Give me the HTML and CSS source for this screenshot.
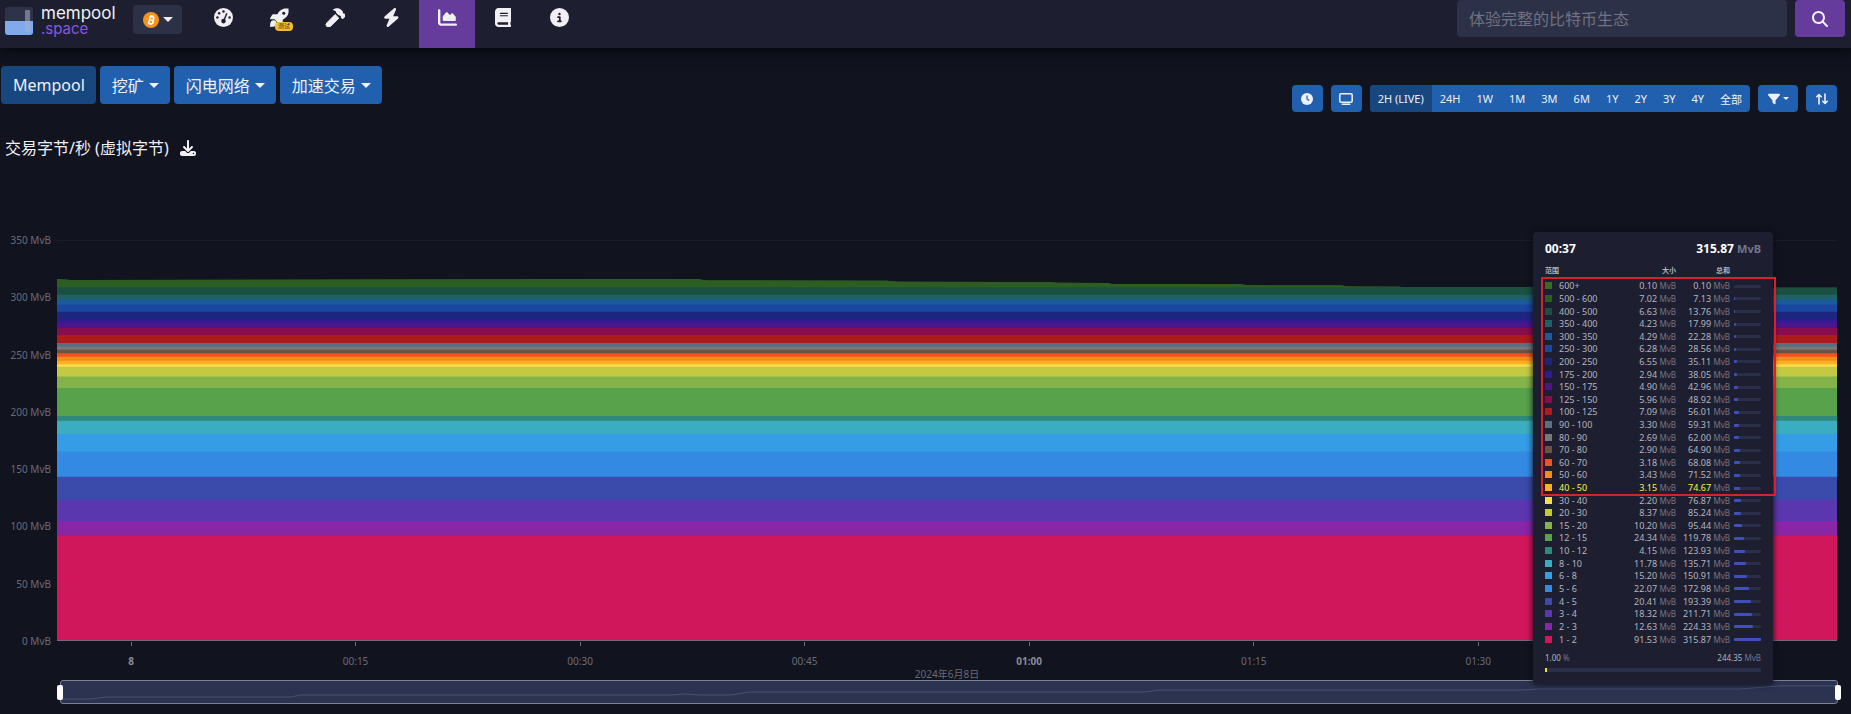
FILE: index.html
```html
<!DOCTYPE html>
<html lang="zh-CN">
<head>
    <meta charset="UTF-8">
    <meta name="viewport" content="width=device-width, initial-scale=1.0">
    <title>mempool.space</title>
    <link rel="stylesheet" href="styles.css">
</head>
<body>

    <header class="navbar">
        <a class="brand" href="#">
            <svg class="brand-mark" viewBox="0 0 28 28">
                <rect width="28" height="28" rx="3" fill="#2e3349"/>
                <path d="M0 14h28v11a3 3 0 0 1-3 3H3a3 3 0 0 1-3-3z" fill="#80aaec"/>
                <rect x="20" y="3" width="5" height="22" rx="1" fill="#a9b0c8" opacity=".55"/>
            </svg>
            <span class="brand-name">
                <span>mempool</span>
                <span class="brand-sub">.space</span>
            </span>
        </a>

        <button class="coin-button caret" type="button" aria-label="Bitcoin">
            <svg width="16" height="16" viewBox="0 0 16 16">
                <circle cx="8" cy="8" r="8" fill="#f7931a"/>
                <g transform="rotate(14 8 8)" fill="none" stroke="#fff" stroke-width="1.5">
                    <path d="M6 4.5h2.600a1.700 1.700 0 0 1 0 3.500H6.500h2.400a1.800 1.800 0 0 1 0 3.600H5.500M6.500 4.500v7M7.200 3v1.500M9 3v1.500M7.200 11.500V13M9 11.500V13"/>
                </g>
            </svg>
        </button>

        <nav class="nav-links">
            <a href="#" aria-label="Dashboard">
                <svg viewBox="0 0 20 20">
                    <circle cx="10" cy="10" r="10"/>
                    <g class="cut">
                        <circle cx="10" cy="3.600" r="1.300"/>
                        <circle cx="5.400" cy="5.500" r="1.300"/>
                        <circle cx="3.600" cy="10" r="1.300"/>
                        <circle cx="16.400" cy="10" r="1.300"/>
                        <circle cx="10" cy="13.800" r="2.400"/>
                        <path class="cut-line" d="M10.300 13.500L13.500 5.500"/>
                    </g>
                </svg>
            </a>
            <a href="#" aria-label="Accelerator">
                <svg viewBox="0 0 20 20">
                    <path d="M19.400.6c.5 3.400.1 6.200-2 8.700-1 1.200-2.400 2.200-4 3v4.100c0 .7-.3 1.100-.9 1.500l-3.300 1.900c-.6.300-1.100 0-1.100-.7v-3.800L4.700 11.900H.9c-.7 0-1-.5-.7-1.100l1.900-3.300c.4-.6.800-.9 1.500-.9h4.100c.8-1.600 1.800-3 3-4C13.200.5 16 .1 19.400.6z"/>
                    <circle class="cut" cx="14.500" cy="5.500" r="1.600"/>
                    <path d="M1.300 13.900c1.500-1.400 3.700-1.300 4.900 0 1.200 1.200 1.300 3.300-.1 4.800-1.100 1.100-3.800 1.200-6 1.200 0-2.200.1-4.900 1.200-6z"/>
                </svg>
                <span class="beta">测试</span>
            </a>
            <a href="#" aria-label="Mining">
                <svg viewBox="0 0 22 20">
                    <path d="M8 2.200C10 .1 14-.5 16.800 1.700l1.700 1.600c.4.500.5 1 .4 1.700l1.200 1.200.6-.5 1.300 1.500c.4.400.4.800 0 1.200l-2.800 3c-.4.400-.8.400-1.200 0l-1.500-1.500.6-.8-1.300-1.300c-.7.200-1.300.1-1.800-.4l-1.700-1.600c-.5-.5-.7-1.100-.7-1.800V3.600C10.600 2.900 9.300 2.400 8 2.200z"/>
                    <path d="M10.600 6.800l4 3.900-9 8.700a2.600 2.600 0 0 1-3.700-3.700z" stroke="#f0f0f4"/>
                </svg>
            </a>
            <a href="#" aria-label="Lightning">
                <svg viewBox="0 0 448 512"><path d="M349.400 44.600c5.900-13.700 1.500-29.700-10.600-38.500s-28.600-8-39.900 1.800l-256 224c-10 8.800-13.600 22.900-8.900 35.300S50.700 288 64 288H175.500L98.600 467.400c-5.900 13.700-1.500 29.700 10.600 38.500s28.600 8 39.900-1.800l256-224c10-8.800 13.600-22.900 8.900-35.300s-16.600-20.700-30-20.700H272.500L349.400 44.600z"/></svg>
            </a>
            <a class="active" href="#" aria-label="Graphs">
                <svg viewBox="0 0 512 512"><path d="M64 64c0-17.700-14.300-32-32-32S0 46.300 0 64V400c0 44.200 35.800 80 80 80H480c17.700 0 32-14.300 32-32s-14.300-32-32-32H80c-8.800 0-16-7.200-16-16V64zm96 288H448c17.700 0 32-14.300 32-32V251.800c0-7.600-2.700-15-7.700-20.800l-65.800-76.800c-12.100-14.200-33.700-15-46.900-1.800l-21 21c-10 10-26.400 9.200-35.400-1.600l-39.200-47c-12.600-15.100-35.700-15.400-48.700-.6L135.900 215c-5.100 5.800-7.900 13.300-7.900 21.100v84c0 17.700 14.300 32 32 32z"/></svg>
            </a>
            <a href="#" aria-label="Docs">
                <svg viewBox="0 0 448 512"><path d="M96 0C43 0 0 43 0 96V416c0 53 43 96 96 96H384h32c17.700 0 32-14.300 32-32s-14.300-32-32-32V384c17.700 0 32-14.300 32-32V32c0-17.700-14.300-32-32-32H384 96zm0 384H352v64H96c-17.700 0-32-14.300-32-32s14.300-32 32-32zm32-240c0-8.800 7.200-16 16-16H336c8.800 0 16 7.200 16 16s-7.200 16-16 16H144c-8.800 0-16-7.200-16-16zm16 48H336c8.800 0 16 7.200 16 16s-7.200 16-16 16H144c-8.800 0-16-7.200-16-16s7.200-16 16-16z"/></svg>
            </a>
            <a href="#" aria-label="About">
                <svg viewBox="0 0 512 512"><path d="M256 512A256 256 0 1 0 256 0a256 256 0 1 0 0 512zM216 336h24V272H216c-13.300 0-24-10.700-24-24s10.700-24 24-24h48c13.300 0 24 10.700 24 24v88h8c13.300 0 24 10.700 24 24s-10.700 24-24 24H216c-13.300 0-24-10.700-24-24s10.700-24 24-24zm40-208a32 32 0 1 1 0 64 32 32 0 1 1 0-64z"/></svg>
            </a>
        </nav>

        <form class="search">
            <input type="text" aria-label="搜索" placeholder="体验完整的比特币生态">
            <button type="submit" aria-label="搜索">
                <svg width="16" height="16" viewBox="0 0 512 512"><path d="M416 208c0 45.900-14.900 88.300-40 122.700L502.600 457.400c12.500 12.500 12.500 32.800 0 45.300s-32.800 12.500-45.300 0L330.700 376c-34.400 25.200-76.800 40-122.700 40C93.100 416 0 322.900 0 208S93.100 0 208 0S416 93.100 416 208zM208 352a144 144 0 1 0 0-288 144 144 0 1 0 0 288z"/></svg>
            </button>
        </form>
    </header>

    <main>
        <div class="toolbar">
            <div class="tabs">
                <button class="tab active" type="button">Mempool</button>
                <button class="tab caret" type="button">挖矿</button>
                <button class="tab caret" type="button">闪电网络</button>
                <button class="tab caret" type="button">加速交易</button>
            </div>

            <div class="controls">
                <button class="small-button" type="button" aria-label="Clock">
                    <svg width="12" height="12" viewBox="0 0 12 12"><circle cx="6" cy="6" r="6"/><path d="M6 2.500V6l2.200 1.600" fill="none" stroke="#2160ae" stroke-width="1.200"/></svg>
                </button>
                <button class="small-button" type="button" aria-label="TV">
                    <svg width="14" height="12" viewBox="0 0 14 12"><rect x=".8" y=".8" width="12.400" height="8.400" rx="1.200" fill="none" stroke="#f0f0f4" stroke-width="1.500"/><rect x="2.500" y="10.400" width="9" height="1.600" rx=".8"/></svg>
                </button>
                <div class="range-group">
                    <button class="active" type="button">2H (LIVE)</button>
                    <button type="button">24H</button>
                    <button type="button">1W</button>
                    <button type="button">1M</button>
                    <button type="button">3M</button>
                    <button type="button">6M</button>
                    <button type="button">1Y</button>
                    <button type="button">2Y</button>
                    <button type="button">3Y</button>
                    <button type="button">4Y</button>
                    <button type="button">全部</button>
                </div>
                <button class="small-button filter caret" type="button" aria-label="Filter">
                    <svg width="12" height="12" viewBox="0 0 512 512"><path d="M3.900 54.900C10.500 40.900 24.500 32 40 32H472c15.500 0 29.500 8.900 36.100 22.900s4.600 30.500-5.200 42.500L320 320.900V448c0 12.100-6.800 23.200-17.700 28.600s-23.800 4.300-33.500-3l-64-48c-8.100-6-12.800-15.500-12.800-25.600V320.900L9 97.300C-.7 85.400-2.800 68.800 3.900 54.900z"/></svg>
                </button>
                <button class="small-button" type="button" aria-label="Invert">
                    <svg width="12" height="12" viewBox="0 0 12 12"><path d="M3 11V1.500M.8 3.700L3 1.500l2.200 2.200M9 1v9.500M6.800 8.300L9 10.500l2.200-2.200" fill="none" stroke="#f0f0f4" stroke-width="1.600" stroke-linecap="round" stroke-linejoin="round"/></svg>
                </button>
            </div>
        </div>

        <h1 class="title">
            交易字节/秒 (虚拟字节)
            <a href="#" aria-label="Download">
                <svg width="16" height="16" viewBox="0 0 512 512"><path d="M288 32c0-17.700-14.300-32-32-32s-32 14.300-32 32V274.700l-73.400-73.400c-12.500-12.500-32.800-12.500-45.300 0s-12.500 32.800 0 45.300l128 128c12.500 12.500 32.800 12.500 45.300 0l128-128c12.500-12.500 12.500-32.800 0-45.300s-32.800-12.500-45.300 0L288 274.700V32zM64 352c-35.300 0-64 28.700-64 64v32c0 35.300 28.700 64 64 64H448c35.300 0 64-28.700 64-64V416c0-35.300-28.700-64-64-64H346.500l-45.300 45.300c-25 25-65.500 25-90.500 0L165.500 352H64zm368 56a24 24 0 1 1 0 48 24 24 0 1 1 0-48z"/></svg>
            </a>
        </h1>

        <section class="chart">
            <div class="y-axis">
                <span>350 MvB</span>
                <span>300 MvB</span>
                <span>250 MvB</span>
                <span>200 MvB</span>
                <span>150 MvB</span>
                <span>100 MvB</span>
                <span>50 MvB</span>
                <span>0 MvB</span>
            </div>
            <svg class="plot" id="plot" viewBox="0 0 1780 401" preserveAspectRatio="none"></svg>
            <div class="x-axis">
                <span class="major">8</span>
                <span>00:15</span>
                <span>00:30</span>
                <span>00:45</span>
                <span class="major">01:00</span>
                <span>01:15</span>
                <span>01:30</span>
            </div>
            <div class="date">2024年6月8日</div>
            <div class="zoom-bar">
                <svg viewBox="0 0 1778 22" preserveAspectRatio="none">
                    <path d="M0 18H30L45 16H230L240 14H610L625 13L640 14H670L690 11H1085L1100 9H1465L1478 8H1680L1720 5H1778" fill="none" stroke="#4a5170"/>
                </svg>
            </div>

            <aside class="tooltip">
                <div class="tooltip-head">
                    <span>00:37</span>
                    <span>315.87 <small>MvB</small></span>
                </div>
                <table>
                    <thead>
                        <tr>
                            <th class="range" colspan="2">范围</th>
                            <th>大小</th>
                            <th>总和</th>
                            <th></th>
                        </tr>
                    </thead>
                    <tbody id="feeRows"></tbody>
                </table>
                <div class="tooltip-foot">
                    <span>1.00 <small>%</small></span>
                    <span>244.35 <small>MvB</small></span>
                </div>
                <div class="share"><div style="width: 1%"></div></div>
                <div class="marker"></div>
            </aside>
        </section>
    </main>

    <script src="script.js"></script>
</body>
</html>
```
FILE: styles.css
```css
* {
    box-sizing: border-box;
}

body {
    margin: 0;
    background-color: #11131f;
    color: #f0f0f4;
    font-family: "Noto Sans", "Noto Sans CJK SC", sans-serif;
    font-size: 16px;
}

a {
    color: inherit;
    text-decoration: none;
}

button {
    border: none;
    color: #f0f0f4;
    font-family: inherit;
    cursor: pointer;
}

svg {
    display: block;
    fill: #f0f0f4;
}

.caret::after {
    content: "";
    border: 5px solid transparent;
    border-top-color: currentColor;
    border-bottom: none;
}

/* Header */
.navbar {
    display: flex;
    align-items: flex-start;
    height: 48px;
    padding: 0 6px 0 5px;
    background-color: #1d1f31;
    box-shadow: 0 0 12px 2px #04060c;
}

.brand {
    display: flex;
    gap: 8px;
    width: 128px;
    padding-top: 7px;
}

.brand-mark {
    width: 28px;
    height: 28px;
}

.brand-name {
    display: flex;
    flex-direction: column;
    margin-top: -2px;
    font-family: Inter, sans-serif;
    font-size: 17px;
    line-height: 17px;
}

.brand-sub {
    font-size: 15px;
    line-height: 14px;
    color: #8758e0;
}

.coin-button {
    display: flex;
    align-items: center;
    gap: 4px;
    height: 29px;
    margin: 5px 13px 0 0;
    padding: 0 9px 0 10px;
    border-radius: 4px;
    background-color: #2d3147;
}

.nav-links {
    display: flex;
}

.nav-links a {
    position: relative;
    display: flex;
    justify-content: center;
    width: 56px;
    height: 48px;
    padding-top: 8px;
}

.nav-links a.active {
    background-color: #653b9c;
}

.nav-links svg {
    height: 19px;
}

.cut {
    fill: #1d1f31;
}

.cut-line {
    stroke: #1d1f31;
    stroke-width: 1.5;
}

.beta {
    position: absolute;
    top: 22px;
    left: 24px;
    width: 18px;
    border-radius: 4px;
    background-color: #f7bd2c;
    color: #3a3222;
    font-size: 6px;
    line-height: 9px;
    text-align: center;
}

.search {
    display: flex;
    gap: 8px;
    margin-left: auto;
}

.search input {
    width: 330px;
    height: 37px;
    padding: 0 12px;
    border: none;
    border-radius: 4px;
    background-color: #2d3147;
    color: #f0f0f4;
    font-family: inherit;
    font-size: 16px;
}

.search input::placeholder {
    color: #6f7280;
}

.search button {
    display: flex;
    align-items: center;
    justify-content: center;
    width: 50px;
    height: 37px;
    border-radius: 4px;
    background-color: #653b9c;
}

/* Toolbar */
.toolbar {
    display: flex;
    justify-content: space-between;
    padding: 18px 14px 0 1px;
}

.tabs {
    display: flex;
    align-items: flex-start;
    gap: 4px;
}

.tab {
    display: flex;
    align-items: center;
    gap: 5px;
    height: 38px;
    padding: 0 11px 0 12px;
    border-radius: 4px;
    background-color: #2160ae;
    font-size: 16px;
}

.tab.active,
.range-group .active {
    background-color: #18477f;
}

.controls {
    display: flex;
    gap: 8px;
    padding-top: 19px;
}

.small-button {
    display: flex;
    align-items: center;
    justify-content: center;
    gap: 3px;
    width: 31px;
    height: 27px;
    padding: 0;
    border-radius: 4px;
    background-color: #2160ae;
}

.filter {
    width: 40px;
}

.filter::after {
    border-width: 3px;
    border-bottom: none;
}

.range-group {
    display: flex;
    border-radius: 4px;
    background-color: #2160ae;
    overflow: hidden;
}

.range-group button {
    padding: 0 8px;
    background-color: transparent;
    font-size: 11px;
}

.title {
    display: flex;
    align-items: center;
    gap: 11px;
    margin: 24px 5px 0;
    font-size: 16px;
    font-weight: 400;
    line-height: 24px;
}

/* Chart */
.chart {
    position: relative;
    display: grid;
    grid-template-columns: 51px 1fr;
    column-gap: 6px;
    margin-top: 80px;
    padding-right: 14px;
    font-size: 10px;
    line-height: 14px;
    color: #696b79;
}

.y-axis {
    display: flex;
    flex-direction: column;
    justify-content: space-between;
    margin: -7px 0;
    text-align: right;
}

.plot {
    width: 100%;
    height: 401px;
}

.x-axis {
    grid-column: 2;
    display: flex;
    margin-left: -2.15%;
    border-top: 1px solid transparent;
}

.x-axis span {
    width: 12.35%;
    text-align: center;
}

.x-axis span::before {
    content: "";
    display: block;
    width: 1px;
    height: 4px;
    margin: 0 auto 8px;
    background-color: #696b79;
}

.x-axis .major {
    font-weight: 700;
    color: #8a8c99;
}

.date {
    grid-column: 2;
    line-height: 12px;
    text-align: center;
}

.zoom-bar {
    grid-column: 2;
    position: relative;
    height: 24px;
    margin: 0 -1px 10px 3px;
    border: 1px solid #7c8094;
    border-radius: 3px;
    background-color: #2c3350;
}

.zoom-bar svg {
    width: 100%;
    height: 22px;
}

/* Drag handles at both ends of the zoom bar */
.zoom-bar::before,
.zoom-bar::after {
    content: "";
    position: absolute;
    top: 4px;
    left: -4px;
    width: 6px;
    height: 15px;
    border-radius: 2px;
    background-color: #ffffff;
}

.zoom-bar::after {
    left: auto;
    right: -4px;
}

/* Tooltip */
.tooltip {
    position: absolute;
    top: -8px;
    right: 78px;
    width: 240px;
    padding: 8px 12px 12px;
    border-radius: 4px;
    background-color: #1d1f31;
    box-shadow: 0 0 6px #0a0c15;
    color: #b4b5bf;
    font-size: 9px;
}

.tooltip small {
    font-size: 8px;
    color: #73758a;
}

.tooltip-head {
    display: flex;
    justify-content: space-between;
    color: #ffffff;
    font-size: 12px;
    font-weight: 700;
    line-height: 18px;
}

.tooltip-head small {
    font-size: 11px;
}

.tooltip table {
    width: 216px;
    height: 382px;
    margin-top: 6px;
    border-collapse: collapse;
    table-layout: fixed;
    line-height: 10px;
}

.tooltip th,
.tooltip td {
    padding: 0;
    text-align: right;
    white-space: nowrap;
}

.tooltip th {
    height: 16px;
    padding-bottom: 2px;
    font-size: 7px;
    font-weight: 700;
}

.tooltip th:first-child {
    width: 70px;
}

.tooltip th:nth-child(2) {
    width: 61px;
}

.tooltip th:nth-child(3) {
    width: 54px;
}

.tooltip th.range,
.tooltip td.range {
    text-align: left;
}

.swatch {
    display: inline-block;
    width: 7px;
    height: 7px;
    margin-right: 7px;
}

.tooltip .highlight {
    color: #f5f543;
}

.progress {
    height: 3px;
    margin-left: 4px;
    border-radius: 1px;
    background-color: #2a2e48;
}

.progress div {
    height: 3px;
    border-radius: 1px;
    background-color: #3f4fbb;
}

.tooltip-foot {
    display: flex;
    justify-content: space-between;
    margin-top: 6px;
    font-size: 8px;
    line-height: 12px;
}

.share {
    height: 4px;
    margin-top: 4px;
    background-color: #2a2e48;
}

.share div {
    height: 4px;
    background-color: #fdd835;
}

.marker {
    position: absolute;
    top: 45px;
    right: -3px;
    left: 8px;
    height: 219px;
    border: 2px solid #d9202c;
}
```
FILE: script.js
```js
// fee range, size, running total, colour
const feeRanges = [
    ['600+', 0.10, 0.10, '#3a6b20'],
    ['500 - 600', 7.02, 7.13, '#2c5e24'],
    ['400 - 500', 6.63, 13.76, '#1a4f41'],
    ['350 - 400', 4.23, 17.99, '#1e6266'],
    ['300 - 350', 4.29, 22.28, '#1b5a9b'],
    ['250 - 300', 6.28, 28.56, '#1848a0'],
    ['200 - 250', 6.55, 35.11, '#1d267e'],
    ['175 - 200', 2.94, 38.05, '#321b92'],
    ['150 - 175', 4.90, 42.96, '#4b168c'],
    ['125 - 150', 5.96, 48.92, '#860e4f'],
    ['100 - 125', 7.09, 56.01, '#b01a1c'],
    ['90 - 100', 3.30, 59.31, '#5a7080'],
    ['80 - 90', 2.69, 62.00, '#787878'],
    ['70 - 80', 2.90, 64.90, '#6f5045'],
    ['60 - 70', 3.18, 68.08, '#ee5422'],
    ['50 - 60', 3.43, 71.52, '#f68b1d'],
    ['40 - 50', 3.15, 74.67, '#fab022'],
    ['30 - 40', 2.20, 76.87, '#fbdb4e'],
    ['20 - 30', 8.37, 85.24, '#c3ca41'],
    ['15 - 20', 10.20, 95.44, '#84b34a'],
    ['12 - 15', 24.34, 119.78, '#57a24b'],
    ['10 - 12', 4.15, 123.93, '#2f8a7b'],
    ['8 - 10', 11.78, 135.71, '#3badc0'],
    ['6 - 8', 15.20, 150.91, '#349de6'],
    ['5 - 6', 22.07, 172.98, '#348ae3'],
    ['4 - 5', 20.41, 193.39, '#3a4bab'],
    ['3 - 4', 18.32, 211.71, '#5a37ae'],
    ['2 - 3', 12.63, 224.33, '#8826a8'],
    ['1 - 2', 91.53, 315.87, '#d0175b']
];

const total = 315.87;
const baseline = 400;
const scale = 400 / 350;
const plot = document.getElementById('plot');
const rows = document.getElementById('feeRows');

// x position and total of the upper edge
const upperEdge = [
    [0, 315.9], [14, 315], [640, 316], [650, 314.5], [830, 314.4], [840, 313.5],
    [990, 313.2], [1000, 312.5], [1050, 312.3], [1055, 311.5], [1184, 311.3],
    [1190, 310.3], [1285, 310.2], [1290, 309.4], [1342, 309.2], [1348, 308.7],
    [1710, 308.7], [1715, 308.2], [1780, 308.2]
];

function addShape(name, attributes) {
    const shape = document.createElementNS('http://www.w3.org/2000/svg', name);
    for (const key in attributes) {
        shape.setAttribute(key, attributes[key]);
    }
    plot.appendChild(shape);
}

addShape('path', { d: 'M0 .5H1780', stroke: '#1b1e29' });

feeRanges.forEach(([range, size, sum, color], i) => {
    const top = total - (i ? feeRanges[i - 1][2] : 0);
    const points = upperEdge.map(([x, value]) => `${x},${baseline - Math.min(value, top) * scale}`);
    addShape('polygon', { points: `0,${baseline} ${points.join(' ')} 1780,${baseline}`, fill: color });

    const row = document.createElement('tr');
    const highlight = range === '40 - 50' ? 'highlight' : '';
    row.innerHTML = `
        <td class="range ${highlight}" colspan="2"><span class="swatch" style="background-color: ${color}"></span>${range}</td>
        <td class="${highlight}">${size.toFixed(2)} <small>MvB</small></td>
        <td class="${highlight}">${sum.toFixed(2)} <small>MvB</small></td>
        <td><div class="progress"><div style="width: ${sum / total * 100}%"></div></div></td>
    `;
    rows.appendChild(row);
});

addShape('path', { d: 'M0 400.5H1780', stroke: '#77697f' });
```
